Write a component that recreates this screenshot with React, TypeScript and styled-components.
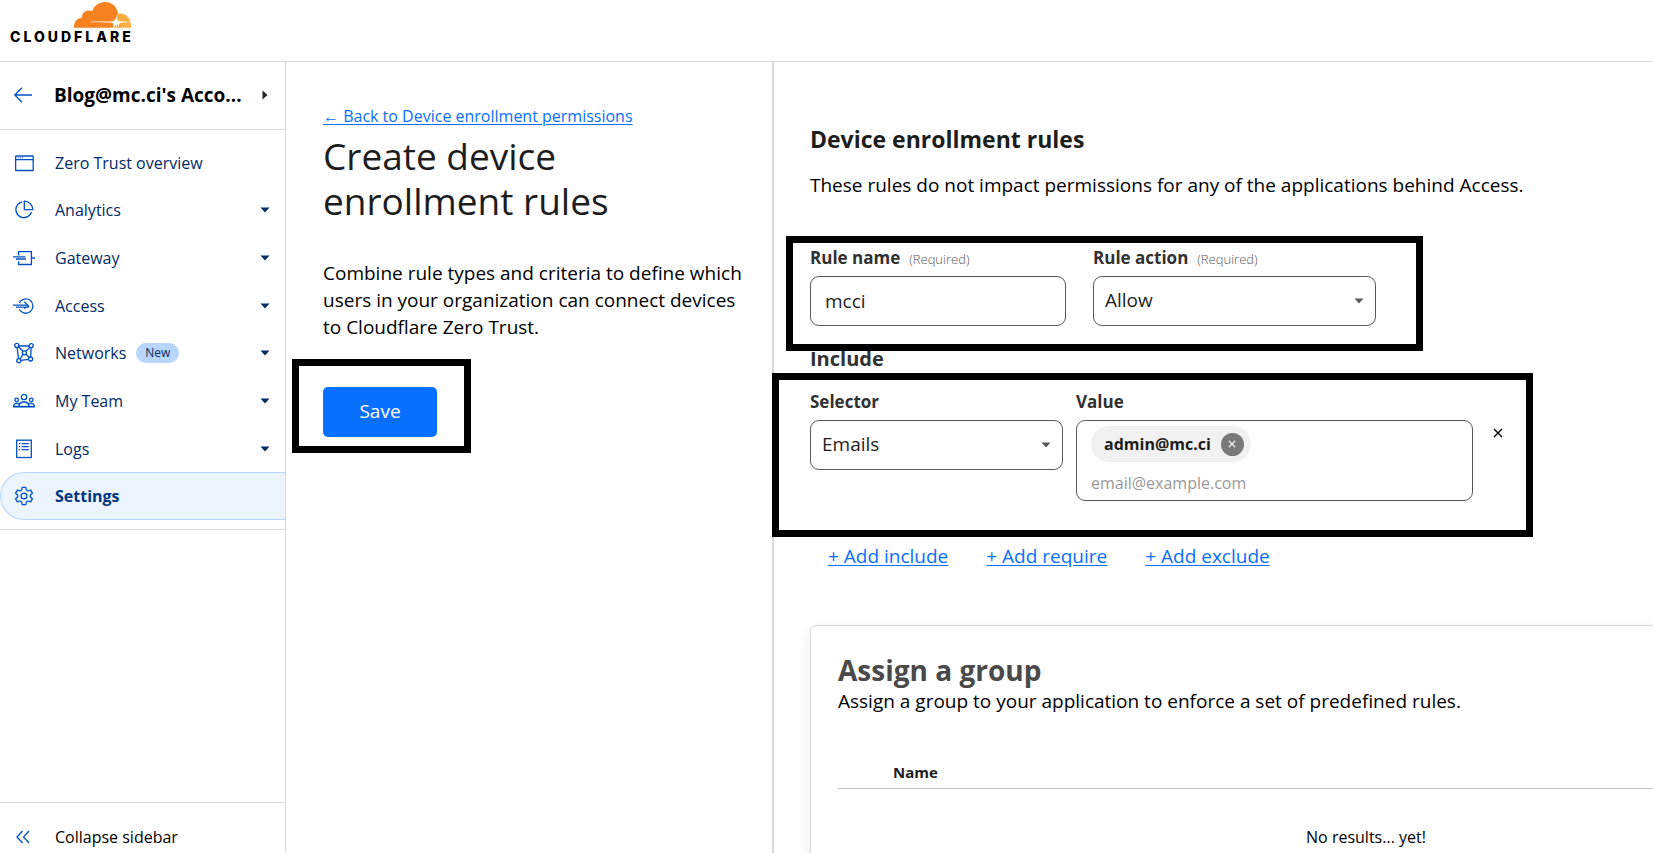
import React, { useState } from "react";
import styled, { createGlobalStyle, css } from "styled-components";

const GlobalStyle = createGlobalStyle`
  *, *::before, *::after { box-sizing: border-box; }
  body {
    margin: 0;
    background: #fff;
    color: #000;
    font-family: "Open Sans", "Noto Sans", sans-serif;
    font-size: 16px;
    line-height: 24px;
  }
  h1, h2, h3, p, ul { margin: 0; padding: 0; }
  button, input, select { font: inherit; color: inherit; margin: 0; }
`;

const line = "#d9d9d9";
const blue = "#0051c3";
const navy = "#002b66";
const link = "#086fff";

const Shell = styled.div`
  display: flex;
  flex-direction: column;
  height: 100vh;
  overflow: hidden;
`;

const TopBar = styled.header`
  flex: none;
  height: 62px;
  padding: 2px 10px;
  border-bottom: 1px solid ${line};
`;

const Logo = styled.a`
  display: inline-flex;
  flex-direction: column;
  align-items: flex-end;
  color: #000;
  text-decoration: none;
`;

const Wordmark = styled.span`
  font-family: Inter, sans-serif;
  font-size: 14px;
  font-weight: 800;
  line-height: 18px;
  letter-spacing: 3px;
  margin-right: -3px;
`;

const Body = styled.div`
  flex: 1;
  display: flex;
  min-height: 0;
`;

const Sidebar = styled.nav`
  flex: 0 0 286px;
  min-width: 0;
  display: flex;
  flex-direction: column;
  border-right: 1px solid ${line};
`;

const Account = styled.button`
  display: flex;
  align-items: center;
  gap: 19px;
  height: 68px;
  padding: 0 17px 2px 13px;
  border: 0;
  border-bottom: 1px solid ${line};
  background: none;
  font-size: 19px;
  font-weight: 700;
  text-align: left;
`;

const AccountName = styled.span`
  flex: 1;
  min-width: 0;
  white-space: nowrap;
`;

const NavList = styled.ul`
  display: grid;
  grid-auto-rows: 1fr;
  min-height: 400px;
  padding: 9px 0;
  list-style: none;
  border-bottom: 1px solid ${line};
`;

const NavEntry = styled.li`
  display: flex;
`;

const navItem = css<{ $active?: boolean }>`
  flex: 1;
  display: flex;
  align-items: center;
  gap: 20px;
  padding: 0 15px 0 13px;
  border: 0;
  background: none;
  color: ${navy};
  font-size: 16px;
  text-align: left;
  text-decoration: none;
  ${(p) =>
    p.$active &&
    css`
      padding-left: 12px;
      border: 1px solid #b6d5fc;
      border-right: 0;
      border-radius: 24px 0 0 24px;
      background: #ebf4ff;
      color: #003681;
      font-weight: 700;
    `}
`;

const NavLink = styled.a`${navItem}`;
const NavButton = styled.button`${navItem}`;

const NavLabel = styled.span`
  flex: 1;
  display: flex;
  align-items: center;
  gap: 10px;
`;

const Badge = styled.span`
  padding: 0 9px;
  border-radius: 10px;
  background: #b9d6ff;
  font-size: 12px;
  line-height: 20px;
`;

const Collapse = styled.button`
  display: flex;
  align-items: center;
  gap: 20px;
  margin-top: auto;
  padding: 22px 13px 4px;
  border: 0;
  border-top: 1px solid ${line};
  background: none;
  font-size: 16px;
  text-align: left;
`;

const Intro = styled.section`
  flex: 0 0 486px;
  padding: 42px 20px 0 37px;
`;

const BackLink = styled.a`
  display: block;
  color: ${link};
  font-size: 16px;
  text-underline-offset: 2px;
`;

const Title = styled.h1`
  margin-top: 5px;
  color: #1d1d1d;
  font-size: 37px;
  font-weight: 400;
  line-height: 45px;
`;

const Text = styled.p`
  font-size: 19px;
  line-height: 27px;
`;

const IntroText = styled(Text)`
  margin: 37px 0 46px;
`;

/* Heavy frame that calls attention to the element it sits in. */
const Frame = styled.div<{ $inset: string }>`
  position: absolute;
  inset: ${(p) => p.$inset};
  z-index: 1;
  border: 7px solid #000;
  pointer-events: none;
`;

const Framed = styled.div`
  position: relative;
  display: flex;
  align-items: flex-start;
  width: fit-content;
`;

const SaveButton = styled.button`
  width: 114px;
  height: 50px;
  padding: 0 0 2px;
  border: 0;
  border-radius: 5px;
  background: ${link};
  color: #fff;
  font-size: 19px;
`;

const Content = styled.main`
  flex: 1;
  min-width: 0;
  padding: 61px 0 0 36px;
  border-left: 2px solid ${line};
`;

const SectionTitle = styled.h2`
  color: #1d1d1d;
  font-size: 23px;
  font-weight: 700;
  line-height: 32px;
`;

const Lead = styled(Text)`
  margin: 17px 0 47px;
`;

const Field = styled.div<{ $width: number }>`
  display: flex;
  flex-direction: column;
  gap: 6px;
  width: ${(p) => p.$width}px;
`;

const LabelRow = styled.div`
  display: flex;
  align-items: baseline;
  gap: 9px;
  height: 24px;
`;

const Label = styled.label`
  color: #313131;
  font-size: 17px;
  font-weight: 700;
`;

const Required = styled.span`
  color: #595959;
  font-size: 13px;
  font-weight: 300;
`;

const box = css`
  border: 1px solid #595959;
  border-radius: 9px;
  background: #fff;
  color: #1d1d1d;
`;

const TextInput = styled.input`
  ${box}
  width: 100%;
  height: 50px;
  padding: 0 14px;
  font-size: 19px;
`;

const SelectBox = styled.div`
  display: grid;
  align-items: center;

  > * { grid-area: 1 / 1; }
  > svg {
    justify-self: end;
    margin-right: 12px;
    pointer-events: none;
  }
`;

const Select = styled.select`
  ${box}
  appearance: none;
  width: 100%;
  height: 50px;
  padding: 0 11px 2px;
  font-size: 19px;
`;

const GroupTitle = styled.h3`
  margin: 21px 0 19px;
  color: #313131;
  font-size: 20px;
  font-weight: 700;
  line-height: 24px;
`;

const TagBox = styled.div`
  ${box}
  display: flex;
  flex-direction: column;
  align-items: flex-start;
  gap: 9px;
  height: 81px;
  padding: 5px 14px;
`;

const Tag = styled.span`
  display: flex;
  align-items: center;
  gap: 10px;
  height: 36px;
  padding: 0 7px 0 13px;
  border-radius: 18px;
  background: #f1f1f1;
  font-size: 16px;
  font-weight: 700;
`;

const TagRemove = styled.button`
  display: grid;
  place-items: center;
  width: 23px;
  height: 23px;
  padding: 0;
  border: 0;
  border-radius: 50%;
  background: #797979;
  color: #fff;
`;

const TagInput = styled.input`
  width: 100%;
  height: 24px;
  padding: 0;
  border: 0;
  outline: 0;
  font-size: 16px;
  &::placeholder { color: #999; opacity: 1; }
`;

const RowRemove = styled.button`
  display: grid;
  place-items: center;
  width: 16px;
  height: 16px;
  margin: 35px 0 0 17px;
  padding: 0;
  border: 0;
  background: none;
`;

const Gap = styled.div<{ $width: number }>`
  flex: 0 0 ${(p) => p.$width}px;
`;

const Actions = styled.div`
  display: flex;
  gap: 38px;
  margin: 41px 0 55px 18px;
`;

const Action = styled.a`
  color: ${link};
  font-size: 19px;
  line-height: 28px;
  text-underline-offset: 2px;
`;

const Card = styled.section`
  min-width: 1112px;
  padding: 27px;
  border: 1px solid ${line};
  border-radius: 6px;
  box-shadow: 0 4px 16px rgba(0, 0, 0, 0.08);
`;

const CardTitle = styled.h2`
  color: #4a4a4a;
  font-size: 28px;
  font-weight: 700;
  line-height: 35px;
`;

const Table = styled.table`
  width: 100%;
  margin-top: 45px;
  border-collapse: collapse;

  th {
    padding: 0 0 4px 55px;
    border-bottom: 1px solid #c5c5c5;
    color: #1d1d1d;
    font-size: 15px;
    text-align: left;
  }
  td {
    padding: 36px 0;
    text-align: center;
  }
`;

const Glyph = styled.svg`
  flex: none;
  display: block;
  fill: none;
  stroke: currentColor;
`;

const Caret = ({ color = navy }: { color?: string }) => (
  <Glyph width="10" height="6" viewBox="0 0 10 6" aria-hidden="true">
    <path d="M0.500 0.500h9L5 5.500z" fill={color} stroke="none" />
  </Glyph>
);

const Cross = ({ size }: { size: number }) => (
  <Glyph width={size} height={size} viewBox="0 0 10 10" strokeWidth="1.400" aria-hidden="true">
    <path d="M1 1l8 8M9 1l-8 8" />
  </Glyph>
);

const Icon = ({ children }: { children: React.ReactNode }) => (
  <Glyph width="22" height="22" viewBox="0 0 22 22" strokeWidth="1.300" color={blue} aria-hidden="true">
    {children}
  </Glyph>
);

const icons: Record<string, React.ReactNode> = {
  overview: (
    <>
      <rect x="2.600" y="4" width="17.600" height="14.500" rx="0.600" />
      <path d="M2.600 7.600h17.600" />
      <path d="M4.500 5.800h1M6.700 5.800h1M8.900 5.800h1" strokeWidth="1" />
    </>
  ),
  analytics: (
    <>
      <path d="M9.300 2.800a8 8 0 1 0 9.200 10.200" />
      <path d="M11.300 2.200v8.500h8.500a8.500 8.500 0 0 0-8.500-8.500z" />
    </>
  ),
  gateway: (
    <>
      <path d="M5.600 8.500V4.600h12.800v12.900H5.600v-3.300" />
      <path d="M0 9.900h12.500M3 12h10M18.400 11H22" />
    </>
  ),
  access: (
    <>
      <path d="M6.200 8a7.200 7.200 0 1 1 0.100 6.300" />
      <path d="M0 10.200h14.500M3 12.200h13M11.200 6.800l4.600 4.400-4.600 2.300" strokeWidth="1.200" />
    </>
  ),
  networks: (
    <>
      <circle cx="3.800" cy="3.400" r="2" />
      <circle cx="18.200" cy="3.700" r="2" />
      <circle cx="11.400" cy="10.800" r="2" />
      <circle cx="5.800" cy="18.700" r="2" />
      <circle cx="17.600" cy="17" r="2" />
      <path d="M5.800 3.800l10.400 0.200M4.100 5.400l1.400 11.300M18.100 5.700l-0.400 9.300M7.800 18.400l7.800-1.100M5.300 4.800l4.700 4.500M16.800 5.200l-4 4.200M10.200 12.400l-3.300 4.700M13 12.100l3.200 3.400" />
    </>
  ),
  team: (
    <>
      <circle cx="11" cy="7" r="2.700" />
      <circle cx="3.700" cy="10" r="1.800" />
      <circle cx="18.300" cy="10" r="1.800" />
      <path d="M6 16.600c0-3.400 2-4.600 5-4.600s5 1.200 5 4.600zM6 16.600H0.700c0-2.200 1-3.300 3-3.300 1.200 0 2 0.400 2.600 1M16 16.600h5.300c0-2.200-1-3.300-3-3.300-1.200 0-2 0.400-2.600 1" />
      <path d="M0.200 16.600h21.600" strokeWidth="1.600" />
    </>
  ),
  logs: (
    <>
      <rect x="3.700" y="2.200" width="14.600" height="17.300" />
      <path d="M8.600 5.700h7.200M8.600 8.700h7.200M8.600 11.700h7.200M6 5.700h1.300M6 8.700h1.300M6 11.700h1.300" strokeWidth="1.200" />
    </>
  ),
  settings: (
    <>
      <circle cx="11" cy="11" r="2.900" />
      <path
        strokeLinejoin="round"
        d="M9.200 2.400h3.600l0.500 2.600 1.800 1 2.500-0.900 1.800 3.100-2 1.700v2.200l2 1.700-1.800 3.100-2.500-0.900-1.800 1-0.500 2.600H9.200L8.700 17l-1.800-1-2.500 0.900-1.800-3.100 2-1.700V9.900l-2-1.700 1.800-3.100 2.500 0.900 1.800-1z"
      />
    </>
  ),
};

const items = [
  { id: "overview", label: "Zero Trust overview", leaf: true },
  { id: "analytics", label: "Analytics" },
  { id: "gateway", label: "Gateway" },
  { id: "access", label: "Access" },
  { id: "networks", label: "Networks", badge: "New" },
  { id: "team", label: "My Team" },
  { id: "logs", label: "Logs" },
  { id: "settings", label: "Settings", leaf: true, active: true },
];

const CloudMark = () => (
  <svg width="57" height="26" viewBox="216 5 171 78" aria-hidden="true">
    <path
      fill="#f6821f"
      d="M216 82c-1-17 9-29 24-30-2-14 13-28 31-19 4-16 20-28 38-28 20 0 35 13 39 33-4 12-7 20-15 25 0 1-70 0-70 2 0 1 60 1 66 2 6 1 6 8 4 15z"
    />
    <path fill="#fbad41" d="M347 41c22-6 42 12 40 41h-51c2-6 5-10 8-14l5 9 5-10 25-1c2 0 2-2 0-2l-24-1c-7-1-11-6-10-12z" />
    <path fill="#fff" d="M343 51c2 9 5 12 14 15-9 3-12 6-14 15-2-9-5-12-14-15 9-3 12-6 14-15z" />
  </svg>
);

export default function App() {
  const [name, setName] = useState("mcci");
  return (
    <>
      <GlobalStyle />
      <Shell>
        <TopBar>
          <Logo href="#" aria-label="Cloudflare">
            <CloudMark />
            <Wordmark>CLOUDFLARE</Wordmark>
          </Logo>
        </TopBar>
        <Body>
          <Sidebar>
            <Account type="button">
              <Icon>
                <path d="M19 11H2M9 3.800L1.800 11l7.200 7.200" />
              </Icon>
              <AccountName>Blog@mc.ci's Acco...</AccountName>
              <Glyph width="6" height="10" viewBox="0 0 6 10" aria-hidden="true">
                <path d="M0.500 0.500v9L5.500 5z" fill="#222" stroke="none" />
              </Glyph>
            </Account>
            <NavList>
              {items.map((item) => {
                const inner = (
                  <>
                    <Icon>{icons[item.id]}</Icon>
                    <NavLabel>
                      {item.label}
                      {item.badge && <Badge>{item.badge}</Badge>}
                    </NavLabel>
                    {!item.leaf && <Caret />}
                  </>
                );
                return (
                  <NavEntry key={item.id}>
                    {item.leaf ? (
                      <NavLink href="#" $active={item.active}>{inner}</NavLink>
                    ) : (
                      <NavButton type="button" aria-expanded="false">{inner}</NavButton>
                    )}
                  </NavEntry>
                );
              })}
            </NavList>
            <Collapse type="button">
              <Icon>
                <path d="M9.500 5L4 11l5.500 6M16 5l-5.500 6 5.500 6" />
              </Icon>
              Collapse sidebar
            </Collapse>
          </Sidebar>

          <Intro>
            <BackLink href="#">← Back to Device enrollment permissions</BackLink>
            <Title>Create device enrollment rules</Title>
            <IntroText>
              Combine rule types and criteria to define which users in your organization can connect devices to
              Cloudflare Zero Trust.
            </IntroText>
            <Framed>
              <SaveButton type="button">Save</SaveButton>
              <Frame $inset="-28px -34px -16px -31px" />
            </Framed>
          </Intro>

          <Content>
            <SectionTitle>Device enrollment rules</SectionTitle>
            <Lead>These rules do not impact permissions for any of the applications behind Access.</Lead>

            <Framed>
              <Field $width={256}>
                <LabelRow>
                  <Label htmlFor="rule-name">Rule name</Label>
                  <Required>(Required)</Required>
                </LabelRow>
                <TextInput id="rule-name" value={name} onChange={(e) => setName(e.target.value)} />
              </Field>
              <Gap $width={27} />
              <Field $width={283}>
                <LabelRow>
                  <Label htmlFor="rule-action">Rule action</Label>
                  <Required>(Required)</Required>
                </LabelRow>
                <SelectBox>
                  <Select id="rule-action">
                    <option>Allow</option>
                  </Select>
                  <Caret color="#595959" />
                </SelectBox>
              </Field>
              <Frame $inset="-10px -47px -25px -24px" />
            </Framed>

            <GroupTitle>Include</GroupTitle>
            <Framed>
              <Field $width={253}>
                <LabelRow>
                  <Label htmlFor="selector">Selector</Label>
                </LabelRow>
                <SelectBox>
                  <Select id="selector">
                    <option>Emails</option>
                  </Select>
                  <Caret color="#595959" />
                </SelectBox>
              </Field>
              <Gap $width={13} />
              <Field $width={397}>
                <LabelRow>
                  <Label htmlFor="value">Value</Label>
                </LabelRow>
                <TagBox>
                  <Tag>
                    admin@mc.ci
                    <TagRemove type="button" aria-label="Remove admin@mc.ci">
                      <Cross size={8} />
                    </TagRemove>
                  </Tag>
                  <TagInput id="value" placeholder="email@example.com" />
                </TagBox>
              </Field>
              <RowRemove type="button" aria-label="Remove rule">
                <Cross size={10} />
              </RowRemove>
              <Frame $inset="-17px -27px -36px -38px" />
            </Framed>

            <Actions>
              <Action href="#">+ Add include</Action>
              <Action href="#">+ Add require</Action>
              <Action href="#">+ Add exclude</Action>
            </Actions>

            <Card>
              <CardTitle>Assign a group</CardTitle>
              <Text>Assign a group to your application to enforce a set of predefined rules.</Text>
              <Table>
                <thead>
                  <tr>
                    <th scope="col">Name</th>
                  </tr>
                </thead>
                <tbody>
                  <tr>
                    <td>No results... yet!</td>
                  </tr>
                </tbody>
              </Table>
            </Card>
          </Content>
        </Body>
      </Shell>
    </>
  );
}
